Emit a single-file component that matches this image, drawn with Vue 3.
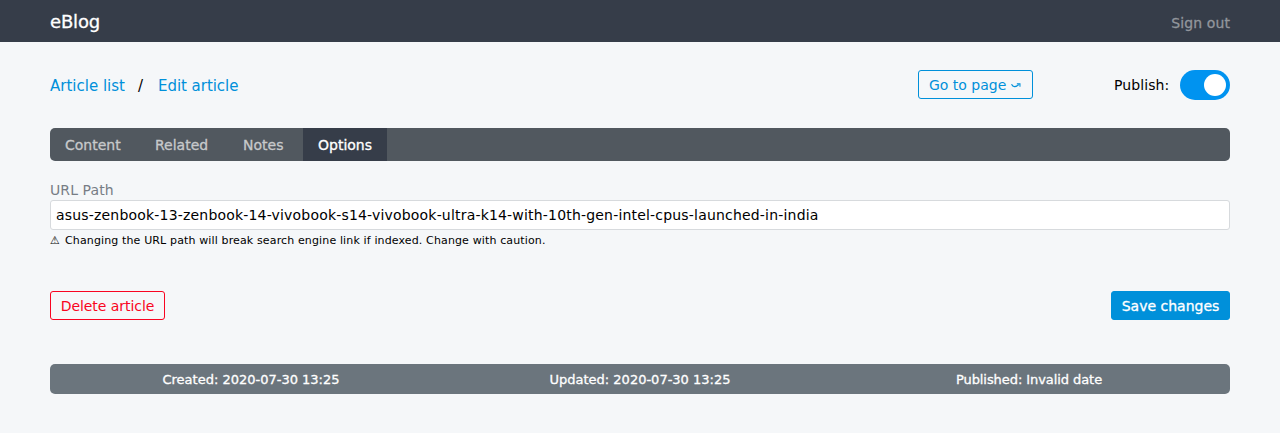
<script setup>
import { ref } from 'vue'

const tabs = ['Content', 'Related', 'Notes', 'Options']
const active = ref('Options')
const published = ref(true)
const path = ref('asus-zenbook-13-zenbook-14-vivobook-s14-vivobook-ultra-k14-with-10th-gen-intel-cpus-launched-in-india')
</script>

<template>
  <div class="page">
    <header class="topbar">
      <span class="brand">eBlog</span>
      <a class="signout">Sign out</a>
    </header>
    <main class="main">
      <div class="toolbar">
        <nav class="crumbs">
          <a class="crumb-list">Article list</a>
          <span class="slash">/</span>
          <a class="crumb-edit">Edit article</a>
        </nav>
        <a class="btn goto">
          <span class="goto-label">Go to page</span>
          <svg class="arrow" width="12" height="8" viewBox="0 0 12 8" fill="none" stroke="currentColor">
            <path d="M0.6 2C2.1 5.4 5.4 5.6 8.8 2.4" stroke-width="1.3" />
            <path d="M6.6 1.6H10.1V4.8" stroke-width="1.2" />
          </svg>
        </a>
        <span class="publish">Publish:</span>
        <button class="switch" :class="{ on: published }" @click="published = !published"><span class="knob"></span></button>
      </div>
      <nav class="tabs">
        <a v-for="t in tabs" :key="t" class="tab" :class="[t.toLowerCase(), { active: t === active }]" @click="active = t">{{ t }}</a>
      </nav>
      <label class="label">URL Path</label>
      <input v-model="path" class="input" type="text" spellcheck="false" />
      <div class="note"><span class="warn">⚠</span><span>Changing the URL path will break search engine link if indexed. Change with caution.</span></div>
      <div class="actions">
        <button class="btn delete">Delete article</button>
        <button class="btn save">Save changes</button>
      </div>
      <footer class="meta">
        <span>Created: 2020-07-30 13:25</span>
        <span>Updated: 2020-07-30 13:25</span>
        <span class="pub">Published: Invalid date</span>
      </footer>
    </main>
  </div>
</template>

<style>
body { background: #f5f7f9; }
</style>

<style scoped>
.page {
  min-height: 433px;
  background: #f5f7f9;
  font-family: Verdana, "DejaVu Sans", sans-serif;
  font-size: 14px;
  line-height: 17px;
  color: #000;
  white-space: nowrap;
}
.page * { box-sizing: border-box; }
.topbar {
  height: 42px;
  padding: 0 50px;
  background: #363d49;
  display: flex;
  justify-content: space-between;
}
.brand { font-size: 18px; line-height: 44px; letter-spacing: -0.15px; color: #fff; }
.signout { line-height: 46px; letter-spacing: 0.1px; color: #92969c; }
.brand, .signout, .tab, .save, .meta { -webkit-text-stroke: 0.3px currentColor; }
.main { padding: 28px 50px 0; }
.toolbar { display: flex; align-items: center; height: 30px; }
.crumbs { display: flex; flex: 1; padding-top: 2px; font-size: 15px; color: #0090da; }
.crumb-edit { letter-spacing: -0.04px; }
.slash { color: #000; margin: 0 15px 0 13px; }
.btn {
  height: 29px;
  padding: 2px 10px 0;
  border: 1px solid #0090da;
  border-radius: 3px;
  background: transparent;
  color: #0090da;
  font: inherit;
  display: flex;
  align-items: center;
  justify-content: center;
}
.goto { width: 115px; margin: 0 81px 1px 0; justify-content: flex-start; }
.arrow { margin: 0 0 0 5px; }
.publish { width: 66px; letter-spacing: 0.08px; }
.switch { width: 50px; height: 30px; padding: 0; border: 0; border-radius: 15px; background: #aaa; display: flex; align-items: center; }
.switch.on { background: #0093f0; }
.knob { width: 22px; height: 22px; margin-left: 4px; border-radius: 50%; background: #fff; }
.on .knob { margin-left: 24px; }
.tabs { margin-top: 28px; height: 33px; border-radius: 5px; background: #51585f; display: flex; overflow: hidden; color: #c7c9cb; line-height: 34px; }
.tab { padding-left: 15px; }
.content { width: 90px; }
.related { width: 88px; }
.notes { width: 75px; }
.options { width: 84px; }
.tab.active { background: #363d49; color: #fff; }
.label { display: block; margin-top: 21px; height: 18px; letter-spacing: 0.1px; color: #777d85; }
.input { display: block; width: 100%; height: 30px; padding: 0 5px; border: 1px solid #d7dadd; border-radius: 3px; background: #fff; color: #000; font: inherit; letter-spacing: 0.188px; outline: none; }
.note { margin-top: 4px; height: 14px; display: flex; font-size: 11px; line-height: 14px; letter-spacing: 0.135px; }
.warn { width: 15px; }
.actions { margin-top: 43px; display: flex; justify-content: space-between; }
.delete { width: 115px; border-color: #f90421; color: #f90421; letter-spacing: -0.05px; }
.save { width: 119px; background: #0090da; color: #fff; }
.meta { margin-top: 44px; height: 30px; border-radius: 5px; background: #6b757d; color: #fff; font-size: 13px; line-height: 31px; display: grid; grid-template-columns: 402px 376px 402px; text-align: center; }
.pub { letter-spacing: -0.07px; }
</style>
